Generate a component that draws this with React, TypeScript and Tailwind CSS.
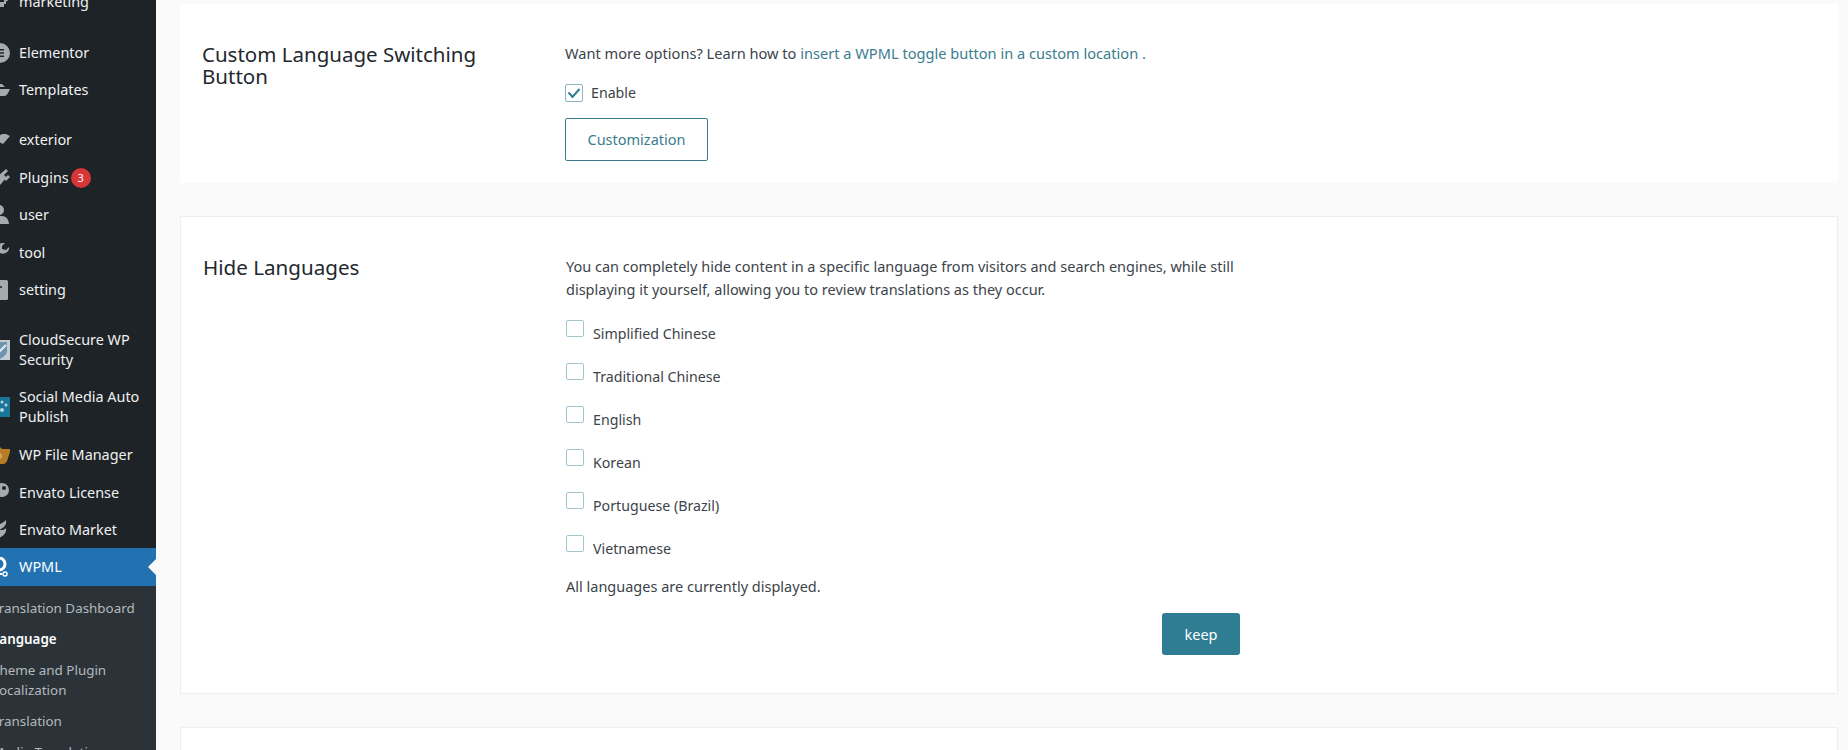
import React from "react";

const G = "#a7aaad";

function Ic({ children }: { children: React.ReactNode }) {
  return (
    <svg viewBox="0 0 20 20" className="w-[20px] h-[20px] ml-[-10px] mr-[9px] shrink-0">
      {children}
    </svg>
  );
}

const icons: Record<string, React.ReactNode> = {
  marketing: (
    <Ic><path d="M10 0a6 6 0 0 1 9 4c0 3-3 5-4 5v2H7V8C6 7 5 6 5 4" fill="none" stroke={G} strokeWidth="2" /><rect x="8" y="12" width="6" height="3" fill={G} /></Ic>
  ),
  elementor: (
    <Ic><circle cx="10" cy="10" r="10" fill={G} /><path d="M8 6h6v1.6H8zM8 9.2h6v1.6H8zM8 12.4h6V14H8z" fill="#1d2327" /></Ic>
  ),
  templates: (
    <Ic><path d="M2 4h10l3 3H2zM2 9h18l-2 4c-1 2-2 3-4 3H6c-2 0-4-2-4-7z" fill={G} /></Ic>
  ),
  exterior: (
    <Ic><path d="M20 6 13 14 9 12 4 9l8-5 4 0zM0 10l5 1 4 3-2 3-7-3z" fill={G} /></Ic>
  ),
  plugins: (
    <Ic><path d="M16 1l2 2-4 4 2 2-1 2-4 5c-2 2-5 2-6 1l-5 3v-8l3-1 5-6 2 0-1 2z M18 7l2 2-4 4-2-2z" fill={G} /></Ic>
  ),
  user: (
    <Ic><circle cx="9" cy="5" r="5" fill={G} /><path d="M0 19c0-7 3-8 9-8s9 1 10 8z" fill={G} /></Ic>
  ),
  tool: (
    <Ic><path d="M19 4l-3 3-4-1 0-3 3-3c-3-1-8 1-7 6L0 11v6l3 0 7-7c4 2 10-1 9-6z" fill={G} /></Ic>
  ),
  setting: (
    <Ic><rect x="-1" y="0" width="19" height="20" rx="1.500" fill={G} /><path d="M9 3v14M6 7h6" stroke="#1d2327" strokeWidth="1.500" /></Ic>
  ),
  cloud: (
    <Ic><rect x="-1" y="0" width="21" height="20" fill="#c2ccd2" /><path d="M2 2h15v9c0 4-4 6-7 8-4-2-8-4-8-8z" fill="#6d95ac" /><path d="M4 10l4 3 8-8" stroke="#e4edf2" strokeWidth="2" fill="none" /></Ic>
  ),
  social: (
    <Ic><rect x="-1" y="0" width="21" height="21" fill="#1a7699" /><circle cx="8" cy="9" r="2" fill="#b7d3df" /><circle cx="12" cy="13" r="2" fill="#b7d3df" /><circle cx="16" cy="8" r="1.500" fill="#b7d3df" /><circle cx="4" cy="15" r="1.500" fill="#b7d3df" /><circle cx="12" cy="5" r="1.500" fill="#b7d3df" /></Ic>
  ),
  file: (
    <Ic><path d="M0 2h7l2-1 3 3h9l-4 12c-1 2-2 3-4 3H0z" fill="#b77c26" /><circle cx="9" cy="11" r="3" fill="#d9a85c" /></Ic>
  ),
  license: (
    <Ic><circle cx="12" cy="7" r="7" fill={G} /><circle cx="14" cy="5" r="2" fill="#1d2327" /><path d="M0 10h8v5H6l-2 2H0z" fill={G} /></Ic>
  ),
  market: (
    <Ic><path d="M16 0c1 5-2 8-7 10 3 0 6 0 7-2 1 5-3 9-8 10l-8 1V9C3 6 11 5 16 0z" fill={G} /></Ic>
  ),
  wpml: (
    <Ic><circle cx="9" cy="7" r="6" fill="none" stroke="#fff" strokeWidth="3" /><circle cx="15" cy="17" r="2" fill="none" stroke="#fff" strokeWidth="1.500" /><path d="M0 17h12M8 11l-2 6" stroke="#fff" strokeWidth="2" /></Ic>
  ),
};

const rows = [
  { k: "marketing", t: "marketing", c: "h-[38px] mt-[-17px]" },
  { k: "elementor", t: "Elementor", c: "h-[38px] mt-[13px]" },
  { k: "templates", t: "Templates", c: "h-[37px] mt-[-1px]" },
  { k: "exterior", t: "exterior", c: "h-[38px] mt-[13px]" },
  { k: "plugins", t: "Plugins", c: "h-[37px]" },
  { k: "user", t: "user", c: "h-[38px]" },
  { k: "tool", t: "tool", c: "h-[37px]" },
  { k: "setting", t: "setting", c: "h-[37px]" },
  { k: "cloud", t: "CloudSecure WP Security", c: "h-[57px] mt-[13px]" },
  { k: "social", t: "Social Media Auto Publish", c: "h-[58px]" },
  { k: "file", t: "WP File Manager", c: "h-[38px]" },
  { k: "license", t: "Envato License", c: "h-[38px]" },
  { k: "market", t: "Envato Market", c: "h-[36px]" },
];

const langs = ["Simplified Chinese", "Traditional Chinese", "English", "Korean", "Portuguese (Brazil)", "Vietnamese"];

export default function App() {
  return (
    <div className="flex h-[750px] w-[1848px] overflow-hidden bg-[#fafafa] font-['Noto_Sans',sans-serif] text-[14.5px] text-[#3c434a]">
      <aside className="w-[156px] h-[750px] shrink-0 overflow-hidden bg-[#1d2327] text-[#f0f0f1] text-[14.4px] flex flex-col">
        {rows.map((r) => (
          <div key={r.k} className={`flex items-center shrink-0 leading-[20px] ${r.c}`}>
            {icons[r.k]}
            <span className="flex items-center">
              {r.t}
              {r.k === "plugins" && (
                <span className="ml-[2px] w-[20px] h-[20px] rounded-full bg-[#d63638] text-white text-[11px] leading-[20px] text-center">3</span>
              )}
            </span>
          </div>
        ))}
        <div className="relative flex items-center h-[38px] shrink-0 bg-[#2271b1] text-white">
          {icons.wpml}
          <span>WPML</span>
          <span className="absolute right-0 top-[11px] border-y-[8px] border-y-transparent border-r-[8px] border-r-[#fafafa]" />
        </div>
        <div className="flex-1 bg-[#2c3338] text-[13.4px] leading-[20px] text-[#b4b9be] pt-[12px]">
          <div className="ml-[-8px] mb-[11px]">Translation Dashboard</div>
          <div className="ml-[-8px] mb-[11px] font-semibold text-white">Language</div>
          <div className="ml-[-8px] mb-[11px] w-[150px]">Theme and Plugin Localization</div>
          <div className="ml-[-8px] mb-[11px]">Translation</div>
          <div className="ml-[-8px]">Media Translation</div>
        </div>
      </aside>
      <main className="flex-1 flex flex-col pl-[24px] pr-[10px] pt-[4px] gap-[33px] min-w-0">
        <section className="h-[179px] shrink-0 bg-white flex pl-[22px] pt-[39px]">
          <h3 className="w-[363px] shrink-0 pr-[50px] text-[20.5px] leading-[22px] text-[#23282d]">Custom Language Switching Button</h3>
          <div className="flex flex-col items-start">
            <p className="leading-[24px] mt-[-2px] text-[14.6px]">
              Want more options? Learn how to <a className="text-[#3a7d8e]">insert a WPML toggle button in a custom location .</a>
            </p>
            <label className="flex items-center gap-[8px] mt-[19px] h-[18px] text-[14.2px]">
              <span className="w-[18px] h-[18px] border border-[#8db4bf] rounded-[2px] flex items-center justify-center bg-white">
                <svg viewBox="0 0 16 16" className="w-[16px] h-[16px]"><path d="M2.500 7.500l4 4.500 7-8" fill="none" stroke="#2f7f94" strokeWidth="2" /></svg>
              </span>
              Enable
            </label>
            <button className="mt-[16px] w-[143px] h-[43px] border border-[#3a7d8e] rounded-[2px] text-[#3a7d8e] bg-white">Customization</button>
          </div>
        </section>
        <section className="h-[478px] shrink-0 bg-white border border-[#eeeeee] flex pl-[22px] pt-[38px]">
          <h3 className="w-[363px] shrink-0 text-[20.6px] leading-[28px] mt-[-2px] text-[#23282d]">Hide Languages</h3>
          <div className="flex flex-col w-[675px]">
            <p className="leading-[23px]">
              You can completely hide content in a specific language from visitors and search engines, while still displaying it yourself, allowing you to review translations as they occur.
            </p>
            <div className="mt-[19px] flex flex-col text-[14.2px]">
              {langs.map((l) => (
                <div key={l} className="flex items-start h-[43px]">
                  <span className="w-[18px] h-[17px] border border-[#a4c3cc] rounded-[2px] bg-white shrink-0" />
                  <span className="ml-[9px] mt-[4px] leading-[20px]">{l}</span>
                </div>
              ))}
            </div>
            <p className="mt-[-3px] leading-[23px]">All languages are currently displayed.</p>
            <button className="self-end mr-[1px] mt-[15px] w-[78px] h-[42px] pt-[1px] rounded-[3px] bg-[#2e7d92] text-white">keep</button>
          </div>
        </section>
        <section className="h-[100px] shrink-0 bg-white border border-[#eeeeee]" />
      </main>
    </div>
  );
}
